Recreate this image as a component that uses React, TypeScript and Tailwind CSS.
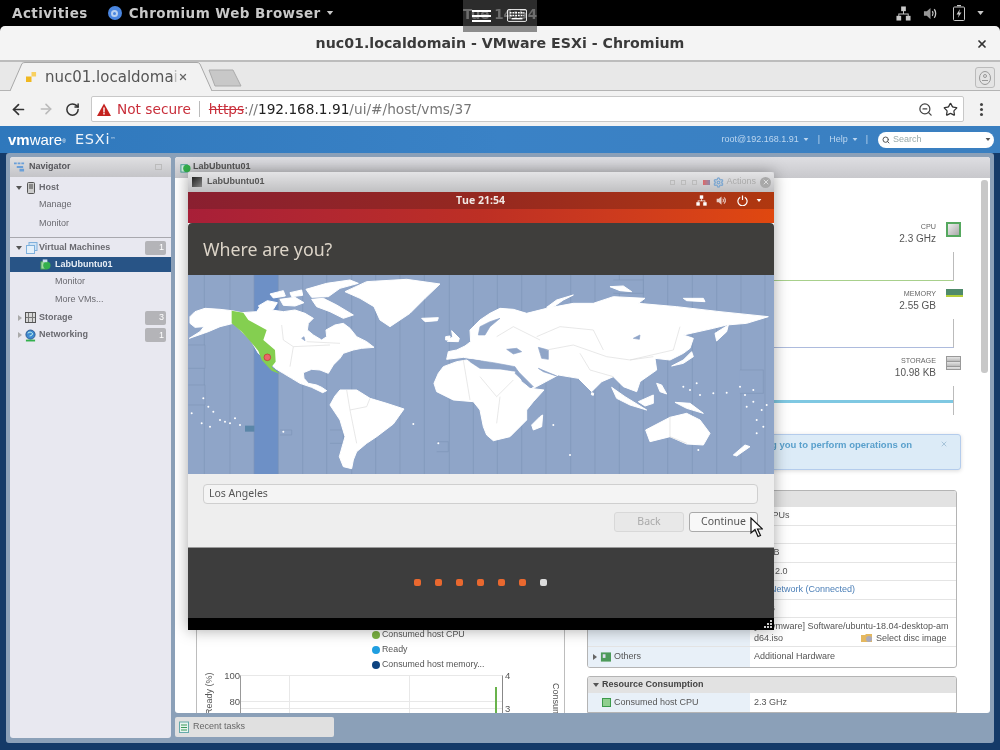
import { ArrowLeft, ArrowRight, RotateCw, ZoomOut, Star, X, Search, Settings } from "lucide-react";

const gnome = "font-['DejaVu_Sans',sans-serif]";
const arial = "font-['Liberation_Sans',Arial,sans-serif]";

function NetIcon({ className }: { className?: string }) {
  return (
    <svg viewBox="0 0 16 16" className={className} fill="currentColor">
      <rect x="5.5" y="0.5" width="5" height="5" />
      <rect x="0.5" y="10.5" width="5" height="5" />
      <rect x="10.5" y="10.5" width="5" height="5" />
      <path d="M7.5 5h1v3h5v3h-1V9H3.5v2h-1V8h5z" />
    </svg>
  );
}
function VolIcon({ className }: { className?: string }) {
  return (
    <svg viewBox="0 0 16 16" className={className} fill="none" stroke="currentColor">
      <path d="M1 5.5h3L8 2v12L4 10.5H1z" fill="currentColor" stroke="none" opacity="0.75" />
      <path d="M10 5.5c1 1.5 1 3.5 0 5M12 3.5c2 2.5 2 6.5 0 9" strokeWidth="1.4" />
    </svg>
  );
}
function Caret({ className }: { className?: string }) {
  return (
    <svg viewBox="0 0 8 5" className={className} fill="currentColor">
      <path d="M0 0h8L4 5z" />
    </svg>
  );
}

const land: string[] = [
  // North America
  "30,140 45,125 75,115 120,118 155,122 185,128 230,125 240,110 275,120 310,125 345,120 375,130 400,145 385,160 382,180 400,195 425,210 440,200 438,180 465,165 490,160 510,175 530,200 560,215 582,232 545,235 520,240 490,250 480,265 460,285 445,310 420,300 395,298 370,308 372,325 385,340 410,345 425,352 440,362 428,368 395,352 360,340 335,325 310,310 285,295 260,270 235,250 215,215 185,185 160,160 120,170 85,185 28,205 60,185 72,170 45,172 30,160",
  // Arctic archipelago
  "235,108 262,92 292,98 280,118 250,120",
  "300,88 345,82 372,98 345,108 310,106",
  "395,88 430,85 470,105 520,135 490,145 450,125 410,110",
  "378,58 440,40 510,30 535,40 480,55 445,80 395,82",
  "330,68 365,60 368,76 335,80",
  "270,72 310,62 316,78 280,84",
  // Greenland
  "495,65 560,35 680,28 780,42 735,85 690,130 630,170 600,150 582,110 540,85",
  // Iceland / UK / Ireland
  "725,145 775,143 772,152 735,155",
  "815,182 838,205 835,215 802,214 818,200",
  "797,200 810,198 810,210 797,210",
  // South America
  "450,405 465,378 480,360 530,360 570,385 620,400 672,417 640,462 590,500 560,520 530,545 520,570 515,596 490,590 478,560 495,500 480,450",
  // Africa
  "762,340 775,310 790,290 830,275 860,270 900,296 960,298 1010,306 1025,335 1050,355 1092,360 1060,395 1040,420 1040,450 990,500 940,512 920,495 910,470 900,420 880,395 820,390 770,365",
  // Eurasia
  "800,268 805,245 830,240 855,228 872,215 870,180 900,150 930,130 960,115 1000,118 1040,130 1100,115 1180,100 1240,100 1300,80 1395,85 1375,100 1490,110 1620,125 1765,140 1700,160 1640,165 1600,175 1510,195 1540,205 1530,235 1510,250 1470,270 1425,265 1430,300 1380,335 1370,365 1330,350 1300,320 1265,335 1235,365 1195,325 1135,315 1060,355 1010,300 970,290 940,282 900,270 850,262",
  // Sakhalin-Kamchatka, Novaya Zemlya, Svalbard
  "1605,190 1645,165 1640,185 1610,213",
  "1100,112 1130,90 1180,75 1150,90 1110,118",
  "1290,50 1330,48 1355,65 1320,62",
  "1510,85 1570,85 1575,95 1520,92",
  // Madagascar
  "1080,440 1088,435 1085,470 1060,480 1055,465",
  // Japan
  "1475,288 1510,270 1535,245 1540,260 1510,280",
  // Indonesia, Borneo, New Guinea
  "1295,352 1335,380 1400,420 1350,405 1310,385",
  "1375,395 1420,375 1420,400 1395,408",
  "1485,397 1530,400 1570,430 1520,415",
  "1430,340 1445,345 1460,372 1440,365",
  // Australia
  "1397,480 1470,442 1520,430 1560,450 1590,490 1570,525 1520,522 1470,500 1410,515",
  // NZ
  "1660,555 1695,525 1710,530 1670,558",
  // Sri Lanka
  "1235,368 1241,370 1240,376 1234,374",
];
const seas: string[] = [
  "900,170 930,155 960,145 930,170 915,195 895,195",
  "980,238 1010,235 1025,245 1000,252",
  "1075,232 1105,240 1105,268 1085,265",
  "870,268 940,278 1005,290 1015,305 960,297 900,295 870,275",
  "1360,205 1380,195 1378,208",
  "1010,300 1060,350 1050,352 1005,310",
  "1075,295 1130,318 1090,305",
  "365,205 372,200 375,212",
];
const borders = [
  "M850,270L860,330 870,390M900,320L950,380 1000,330M960,380L950,460",
  "M305,165L310,210 340,230 330,290M380,215L480,220M340,230L450,225",
  "M500,360L510,420 560,410 570,385M510,420L530,520",
  "M1070,200L1140,170 1240,180 1270,240M1100,240L1180,225 1280,260 1350,270 1420,260M1200,250L1230,300 1300,320M1350,270L1480,240 1500,170",
  "M950,200L1000,170 1080,210M1470,440L1470,500 1520,520",
];
const lines = [73, 150, 222, 295, 368, 440, 515, 587, 660, 733, 808, 880, 952, 1025, 1098, 1172, 1245, 1318, 1390, 1463, 1537, 1610, 1683, 1755];
const dots = [
  [70, 385], [85, 410], [100, 425], [35, 430], [65, 460], [120, 450], [135, 455], [150, 460], [165, 445], [180, 465], [90, 470], [310, 485], [700, 462], [775, 520], [1120, 465], [1170, 555], [1510, 350], [1550, 340], [1530, 360], [1560, 375], [1600, 370], [1640, 368], [1680, 350], [1695, 375], [1720, 395], [1745, 420], [1730, 450], [1750, 470], [1760, 405], [1700, 410], [1730, 490], [1555, 540], [1720, 360],
];

function WorldMap() {
  return (
    <svg viewBox="0 0 586 199" className="block h-[199px] w-[586px] shrink-0">
      <rect width="586" height="199" fill="#8fa5c8" />
      <g transform="translate(-8,-5) scale(0.33333)">
        <rect x="222" y="0" width="73" height="620" fill="#6d90c6" />
        {lines.map((x) => (
          <path key={x} d={`M${x},0V620`} stroke="#7f95b8" strokeWidth="2" fill="none" />
        ))}
        <path d="M25,225H75V295H25M25,345H75V405H25M1300,30H1390V70H1300M1680,300H1750V370H1680M300,480H335V495H300M770,515H805V545H770M450,480H490V520H450" stroke="#7f95b8" strokeWidth="2" fill="#8fa5c8" />
        {land.map((p, i) => (
          <polygon key={i} points={p} fill="#fff" stroke="#fff" strokeWidth="3" strokeLinejoin="round" />
        ))}
        {seas.map((p, i) => (
          <polygon key={i} points={p} fill="#8fa5c8" stroke="#8fa5c8" strokeWidth="2" strokeLinejoin="round" />
        ))}
        {borders.map((d, i) => (
          <path key={i} d={d} stroke="#dcdcdc" strokeWidth="2" fill="none" />
        ))}
        {dots.map(([x, y], i) => (
          <circle key={i} cx={x} cy={y} r="3" fill="#fff" />
        ))}
        <polygon points="155,122 190,128 205,150 260,180 250,210 285,240 287,275 275,290 300,312 275,302 245,270 235,243 212,215 185,185 155,160" fill="#84cf50" />
        <rect x="195" y="467" width="28" height="18" fill="#5a86a8" />
        <circle cx="262" cy="262" r="10" fill="#e8686a" stroke="#c0302a" strokeWidth="2" />
      </g>
    </svg>
  );
}

function NavRow({ label, indent, className }: { label: string; indent: string; className?: string }) {
  return <div className={`flex items-center ${indent} ${className ?? ""}`}>{label}</div>;
}
function Badge({ n }: { n: number }) {
  return <span className="ml-auto mr-[5px] flex h-[14px] w-[21px] items-center justify-end rounded-[2px] bg-[#b4b4b8] pr-[2px] text-[9px] leading-none text-white">{n}</span>;
}
function TreeCaret({ open }: { open?: boolean }) {
  return open ? (
    <svg viewBox="0 0 6 4" className="h-[4px] w-[6px] text-[#555]" fill="currentColor"><path d="M0 0h6L3 4z" /></svg>
  ) : (
    <svg viewBox="0 0 4 6" className="h-[6px] w-[4px] text-[#aaa]" fill="currentColor"><path d="M0 0v6l4-3z" /></svg>
  );
}

function Navigator() {
  return (
    <aside className="flex w-[161px] shrink-0 flex-col rounded-[3px] bg-[#e8e8f0] text-[9px] text-[#6a6a70]">
      <div className="flex h-[20px] items-center rounded-t-[3px] bg-gradient-to-b from-[#e0e0e2] to-[#c4c4c8] pl-[4px] font-bold text-[#55555a]">
        <svg viewBox="0 0 12 12" className="h-[12px] w-[11px]"><path d="M0 1h3v2H0zM4 1h3v2H4zM8 1h3v2H8zM3 5h7v2H3zM6 8h5v3H6z" fill="#6a9fd8" /></svg>
        <span className="ml-[4px]">Navigator</span>
        <span className="ml-auto mr-[9px] h-[6px] w-[7px] border border-[#bbb]" />
      </div>
      <div className="flex h-[21px] items-center pl-[6px]">
        <TreeCaret open />
        <svg viewBox="0 0 8 12" className="ml-[5px] h-[12px] w-[8px]"><rect x="0.5" y="0.5" width="7" height="11" rx="1" fill="#ccc" stroke="#555" /><rect x="2" y="2" width="4" height="5" fill="#888" /></svg>
        <span className="ml-[4px] font-bold">Host</span>
      </div>
      <NavRow label="Manage" indent="pl-[29px]" className="h-[13px]" />
      <NavRow label="Monitor" indent="pl-[29px]" className="h-[26px]" />
      <div className="h-[1px] bg-[#a8a8ae]" />
      <div className="flex h-[19px] items-center pl-[6px]">
        <TreeCaret open />
        <svg viewBox="0 0 12 12" className="ml-[4px] h-[12px] w-[12px]"><rect x="3" y="0.5" width="8" height="8" fill="#cfe3f5" stroke="#7fb0dc" /><rect x="0.5" y="3.5" width="8" height="8" fill="#e4f0fa" stroke="#7fb0dc" /></svg>
        <span className="ml-[1px] font-bold">Virtual Machines</span>
        <Badge n={1} />
      </div>
      <div className="flex h-[15px] items-center bg-[#285486] pl-[30px] font-bold text-[#e8eef5]">
        <svg viewBox="0 0 12 12" className="h-[11px] w-[11px]"><rect x="1" y="3" width="7" height="8" fill="#9fd8a0" stroke="#3c9a4c" /><circle cx="7.5" cy="7" r="4" fill="#34b04c" /><rect x="3" y="0.5" width="5" height="3" fill="#cde" /></svg>
        <span className="ml-[4px]">LabUbuntu01</span>
      </div>
      <NavRow label="Monitor" indent="pl-[45px]" className="h-[19px]" />
      <NavRow label="More VMs..." indent="pl-[45px]" className="h-[17px]" />
      <div className="flex h-[19px] items-center pl-[8px]">
        <TreeCaret />
        <svg viewBox="0 0 11 11" className="ml-[3px] h-[11px] w-[11px]"><rect x="0.5" y="0.5" width="10" height="10" fill="#d8d8d8" stroke="#555" /><path d="M3.5 1v9M7.5 1v9M1 5.5h9" stroke="#777" /></svg>
        <span className="ml-[3px] font-bold">Storage</span>
        <Badge n={3} />
      </div>
      <div className="flex h-[16px] items-center pl-[8px]">
        <TreeCaret />
        <svg viewBox="0 0 12 13" className="ml-[3px] h-[13px] w-[11px]"><circle cx="6" cy="5.5" r="5" fill="#3f89d0" stroke="#2a5a90" /><path d="M3 4c2-2 4-1 5 0s-1 3-3 3" stroke="#cfe" fill="none" /><rect x="1" y="11" width="10" height="2" fill="#34b04c" /></svg>
        <span className="ml-[3px] font-bold">Networking</span>
        <Badge n={1} />
      </div>
    </aside>
  );
}

function Stat({ label, value, icon, bar }: { label: string; value: string; icon: React.ReactNode; bar: React.ReactNode }) {
  return (
    <div className="flex h-[67px] flex-col items-end">
      <div className="flex h-[30px] items-start">
        <div className={`text-right ${arial}`}>
          <div className="text-[7.2px] leading-[9px] text-[#666]">{label}</div>
          <div className="text-[10px] leading-[15px] text-[#555]">{value}</div>
        </div>
        <div className="ml-[10px] mr-[-8px] w-[16px]">{icon}</div>
      </div>
      {bar}
    </div>
  );
}

function HwRow({ h = 19, left, right, blue }: { h?: number; left?: React.ReactNode; right?: React.ReactNode; blue?: boolean }) {
  return (
    <div className="flex border-b border-[#e4e4e4]" style={{ height: h }}>
      <div className="flex w-[162px] shrink-0 items-center bg-[#e8f0f8] pl-[6px]">{left}</div>
      <div className={`flex-1 px-[4px] pt-[2px] ${blue ? "text-[#4d80b8]" : ""}`}>{right}</div>
    </div>
  );
}

function MainPanel() {
  return (
    <section className="flex h-[556px] w-[815px] flex-col overflow-hidden rounded-[3px] bg-white">
      <div className="flex h-[21px] shrink-0 items-center bg-gradient-to-b from-[#dedee2] to-[#c8c8cc] pb-[1px] pl-[5px] text-[9px] font-bold text-[#555]">
        <svg viewBox="0 0 12 12" className="h-[11px] w-[11px]"><rect x="1" y="3" width="7" height="8" fill="#cfeadf" stroke="#3c9a8c" /><circle cx="7.5" cy="7" r="4" fill="#34b04c" /></svg>
        <span className="ml-[2px]">LabUbuntu01</span>
      </div>
      <div className="flex min-h-0 flex-1 text-[9px] text-[#555]">
        <div className={`flex w-[806px] shrink-0 flex-col pl-[21px] ${arial}`}>
          <div className="h-[44px] shrink-0" />
          <div className="shrink-0 pr-[27px]">
            <Stat
              label="CPU"
              value="2.3 GHz"
              icon={<span className="block h-[15px] w-[15px] border-2 border-[#55a85f] bg-gradient-to-br from-[#eee] to-[#aaa]" />}
              bar={<div className="h-[29px] w-[300px] border-b border-r border-b-[#a8d08c] border-r-[#bbb]" />}
            />
            <Stat
              label="MEMORY"
              value="2.55 GB"
              icon={<span className="block h-[8px] w-[17px] border-b-2 border-[#b5cf3a] bg-[#4f8a6a]" />}
              bar={<div className="h-[29px] w-[300px] border-b border-r border-b-[#adbbdd] border-r-[#bbb]" />}
            />
            <Stat
              label="STORAGE"
              value="10.98 KB"
              icon={<span className="block h-[14px] w-[15px] border border-[#999] bg-[repeating-linear-gradient(180deg,#e4e4e4_0,#bbb_4px,#777_5px)]" />}
              bar={
                <div className="flex h-[29px] w-[300px] flex-col border-r border-[#bbb] pt-[14px]">
                  <div className="h-[3px] bg-[#7fc8e2]" />
                </div>
              }
            />
          </div>
          <div className="ml-auto mr-[20px] mt-[11px] flex h-[36px] w-[400px] shrink-0 justify-end rounded-[3px] border border-[#b4ccec] bg-[#dcebf7] pr-[12px] pt-[3px] text-[9.5px] font-bold text-[#5aa0cc] shadow-[0_1px_4px_rgba(0,0,0,0.15)]">
            <span>allowing you to perform operations on</span>
            <X className="ml-[28px] mt-[2px] h-[8px] w-[8px] text-[#9cbcd4]" strokeWidth={2.5} />
          </div>
          <div className="mt-[20px] flex min-h-0 flex-1 gap-[22px]">
            <div className="flex w-[369px] shrink-0 flex-col border-x border-[#bdbdbd]">
              <div className="h-[137px] shrink-0" />
              <div className="ml-[175px] flex flex-col text-[8.8px] leading-[15px] text-[#555]">
                {[
                  ["bg-[#7cb342]", "Consumed host CPU"],
                  ["bg-[#1f9ee0]", "Ready"],
                  ["bg-[#0d4380]", "Consumed host memory..."],
                ].map(([c, t]) => (
                  <div key={t} className="flex items-center gap-[2px]">
                    <span className={`h-[8px] w-[8px] rounded-full ${c}`} />
                    {t}
                  </div>
                ))}
              </div>
              <div className="mt-[3px] flex h-[40px] shrink-0 text-[9.5px] text-[#555]">
                <div className="flex w-[18px] justify-end"><span className="translate-x-[1px] whitespace-nowrap text-[9px] [writing-mode:vertical-rl] rotate-180">Ready (%)</span></div>
                <div className="w-[25px] text-right leading-[26px]">
                  <div className="mt-[-12px]">100</div>
                  <div>80</div>
                </div>
                <div className="relative w-[263px] border-x border-t border-l-[#999] border-r-[#888] border-t-[#e8e8e8] bg-[linear-gradient(#e8e8e8,#e8e8e8),linear-gradient(#e8e8e8,#e8e8e8)] bg-[length:100%_1px,100%_1px] bg-[position:0_25px,0_32px] bg-no-repeat">
                  <div className="flex h-full">
                    <div className="h-full w-[49px] border-r border-[#e8e8e8]" />
                    <div className="h-full w-[120px] border-r border-[#e8e8e8]" />
                  </div>
                  <span className="absolute left-[254px] top-[11px] h-[29px] w-[2px] bg-[#69b34c]" />
                </div>
                <div className="w-[14px] pl-[2px] leading-[33px]">
                  <div className="mt-[-16px]">4</div>
                  <div>3</div>
                </div>
                <div className="ml-[31px] mt-[8px] whitespace-nowrap text-[9px] [writing-mode:vertical-rl]">Consum</div>
              </div>
            </div>
            <div className="flex w-[370px] shrink-0 flex-col gap-[8px]">
              <div className="shrink-0 overflow-hidden rounded-[3px] border border-[#b4b4b4] text-[9px]">
                <div className="h-[16px] bg-[#e2e2e2]" />
                <HwRow right="2 vCPUs" />
                <HwRow right="2 GB" h={18} />
                <HwRow right="16 GB" />
                <HwRow right="USB 2.0" h={18} />
                <HwRow right="VM Network (Connected)" blue h={19} />
                <HwRow right="4 MB" h={18} />
                <HwRow
                  h={29}
                  right={
                    <div className="leading-[12px]">
                      <div className="whitespace-nowrap">[iso-vmware] Software/ubuntu-18.04-desktop-am</div>
                      <div className="flex items-center">
                        d64.iso
                        <span className="ml-[78px] flex items-center gap-[3px]">
                          <svg viewBox="0 0 12 10" className="h-[10px] w-[12px]"><path d="M0 2h4l1-1h6v8H0z" fill="#e4b860" /><circle cx="8" cy="6" r="3" fill="#aab" /></svg>
                          Select disc image
                        </span>
                      </div>
                    </div>
                  }
                />
                <div className="flex h-[20px]">
                  <div className="flex w-[162px] shrink-0 items-center bg-[#e8f0f8] pl-[5px]">
                    <svg viewBox="0 0 4 6" className="h-[6px] w-[4px] text-[#666]" fill="currentColor"><path d="M0 0v6l4-3z" /></svg>
                    <svg viewBox="0 0 12 10" className="ml-[3px] h-[10px] w-[11px]"><rect x="1" y="0" width="11" height="10" fill="#4d9a5a" /><rect x="3" y="2" width="3" height="4" fill="#dde" /></svg>
                    <span className="ml-[3px]">Others</span>
                  </div>
                  <div className="flex flex-1 items-center px-[4px]">Additional Hardware</div>
                </div>
              </div>
              <div className="shrink-0 overflow-hidden rounded-t-[3px] border border-[#b4b4b4] text-[9px]">
                <div className="flex h-[16px] items-center bg-[#e2e2e2] pl-[5px] font-bold text-[#444]">
                  <TreeCaret open />
                  <span className="ml-[3px]">Resource Consumption</span>
                </div>
                <div className="flex h-[19px]">
                  <div className="flex w-[162px] shrink-0 items-center bg-[#e8f0f8] pl-[14px]">
                    <span className="h-[9px] w-[9px] border border-[#3c9a4c] bg-[#8fcf8f]" />
                    <span className="ml-[3px]">Consumed host CPU</span>
                  </div>
                  <div className="flex flex-1 items-center px-[4px]">2.3 GHz</div>
                </div>
              </div>
            </div>
          </div>
        </div>
        <div className="mt-[2px] h-[193px] w-[7px] rounded-[3px] bg-[#c8c8c8]" />
      </div>
    </section>
  );
}

function VmWindow() {
  return (
    <div className="absolute left-[188px] top-[172px] flex h-[458px] w-[586px] flex-col shadow-[0_0_14px_rgba(0,0,0,0.35)]">
      <div className={`flex h-[20px] shrink-0 items-center rounded-t-[3px] bg-gradient-to-b from-[#e4e4e6] to-[#c0c0c2] pl-[4px] pr-[3px] text-[9px] text-[#555] ${arial}`}>
        <span className="h-[10px] w-[10px] bg-gradient-to-br from-[#222] to-[#888]" />
        <span className="ml-[5px] font-bold">LabUbuntu01</span>
        <div className="ml-auto flex items-center text-[#aaa]">
          <span className="h-[5px] w-[5px] border border-[#bbb]" />
          <span className="ml-[6px] h-[5px] w-[5px] border border-[#bbb]" />
          <span className="ml-[6px] h-[5px] w-[5px] border border-[#bbb]" />
          <span className="ml-[6px] h-[5px] w-[7px] bg-gradient-to-r from-[#d66] to-[#88a]" />
          <Settings className="ml-[3px] h-[11px] w-[11px] text-[#7fa8d0]" strokeWidth={3} />
          <span className="ml-[2px]">Actions</span>
          <span className="ml-[4px] flex h-[11px] w-[11px] items-center justify-center rounded-full bg-[#a8a8a8]"><X className="h-[8px] w-[8px] text-[#ddd]" strokeWidth={3} /></span>
        </div>
      </div>
      <div className="flex h-[17px] shrink-0 items-center bg-gradient-to-r from-[#8a1f30] via-[#95281f] to-[#b0380f]">
        <span className="ml-[268px] w-[49px] whitespace-nowrap font-['Open_Sans',sans-serif] text-[10.5px] font-bold text-[#f0e8e4]">Tue 21:54</span>
        <NetIcon className="ml-[191px] h-[11px] w-[11px] text-white" />
        <VolIcon className="ml-[9px] h-[11px] w-[11px] text-white" />
        <svg viewBox="0 0 12 12" className="ml-[10px] h-[11px] w-[11px]" fill="none" stroke="#fff" strokeWidth="1.3"><path d="M3.5 2.5a5 5 0 1 0 5 0M6 0.5v5" /></svg>
        <Caret className="ml-[8px] h-[3px] w-[6px] text-white" />
      </div>
      <div className="h-[14px] shrink-0 bg-gradient-to-r from-[#a81f38] via-[#bd2f24] to-[#e0480f]" />
      <div className="flex h-[52px] shrink-0 items-center rounded-t-[4px] bg-[#3f3e3c] pl-[15px] font-['Noto_Sans',sans-serif] text-[17.8px] text-[#dcd4c8]">
        Where are you?
      </div>
      <WorldMap />
      <div className="flex h-[73px] shrink-0 flex-col bg-[#eeeeee] pl-[15px] pr-[16px] pt-[10px] font-['Noto_Sans',sans-serif] text-[10.5px] text-[#555]">
        <div className="flex h-[20px] items-center rounded-[4px] border border-[#cfcfcf] bg-[#f4f4f4] pl-[5px]">Los Angeles</div>
        <div className="mt-[8px] flex justify-end gap-[5px]">
          <div className="flex h-[20px] w-[70px] items-center justify-center rounded-[3px] border border-[#d8d8d8] bg-[#e8e8e8] text-[#aaa]">Back</div>
          <div className="flex h-[20px] w-[69px] items-center justify-center rounded-[3px] border border-[#aaa] bg-[#f8f8f8] text-[#555]">Continue</div>
        </div>
      </div>
      <div className="flex h-[71px] shrink-0 items-center justify-center gap-[14px] border-t border-[#999] bg-[#3d3d3d] pb-[1px] pr-[1px]">
        {[0, 1, 2, 3, 4, 5].map((i) => (
          <span key={i} className="h-[7px] w-[7px] rounded-[2px] bg-[#e9682f]" />
        ))}
        <span className="h-[7px] w-[7px] rounded-[2px] bg-[#dcdcdc]" />
      </div>
      <div className="flex h-[12px] shrink-0 items-end justify-end bg-black pb-[1px] pr-[1px]">
        <svg viewBox="0 0 9 9" className="h-[9px] w-[9px]" fill="#ccc"><path d="M6 0h2v2H6zM6 3h2v2H6zM3 3h2v2H3zM6 6h2v2H6zM3 6h2v2H3zM0 6h2v2H0z" /></svg>
      </div>
    </div>
  );
}

export default function App() {
  return (
    <div className={`relative flex h-[750px] w-[1000px] flex-col overflow-hidden bg-black blur-[0.35px] ${gnome}`}>
      {/* GNOME top bar */}
      <header className="flex h-[26px] shrink-0 items-center text-[13.5px] font-bold tracking-[0.45px] text-[#c8c8c8]">
        <span className="ml-[12px]">Activities</span>
        <span className="ml-[20px] flex h-[14px] w-[14px] items-center justify-center rounded-full bg-[#4a86e0]">
          <span className="h-[7px] w-[7px] rounded-full border-2 border-[#b8d0f0]" />
        </span>
        <span className="ml-[7px]">Chromium Web Browser</span>
        <Caret className="ml-[5px] h-[4px] w-[8px]" />
        <div className="ml-auto flex items-center text-[#c8c8c8]">
          <NetIcon className="h-[15px] w-[15px]" />
          <VolIcon className="ml-[12px] h-[15px] w-[15px]" />
          <svg viewBox="0 0 12 16" className="ml-[15px] h-[16px] w-[12px]" fill="none" stroke="currentColor"><rect x="0.5" y="2" width="11" height="13.5" rx="1" /><path d="M4 0.5h4" strokeWidth="1.5" /><path d="M7 4L3.5 9.5h2.3L4.8 13l3.7-5.5H6.2z" fill="currentColor" stroke="none" /></svg>
          <Caret className="ml-[11px] mr-[15px] h-[4px] w-[9px]" />
        </div>
      </header>

      {/* Chromium window */}
      <main className="flex min-h-0 flex-1 flex-col overflow-hidden rounded-t-[5px] bg-[#f4f4f4]">
        <div className="flex h-[36px] shrink-0 items-center border-b-2 border-[#bcbcbc] pt-[2px]">
          <span className="flex-1 pl-[24px] text-center text-[14.2px] font-bold text-[#3a3a3a]">nuc01.localdomain - VMware ESXi - Chromium</span>
          <X className="mr-[12px] h-[12px] w-[12px] text-[#333]" strokeWidth={3.5} />
        </div>
        <div className="flex h-[29px] shrink-0 items-end border-b border-[#b4b4b4] bg-[#e8e8e8] pl-[10px]">
          <div className="relative flex h-[28px] w-[202px] items-center pl-[16px] pt-[2px] text-[15px] text-[#555]">
            <svg viewBox="0 0 202 29" className="absolute inset-0 h-[29px] w-[202px]" fill="#f2f2f2" stroke="#a8a8a8"><path d="M0 29L12 1.5Q13 .5 15 .5H187Q189 .5 190 2L202 29" /></svg>
            <svg viewBox="0 0 12 12" className="relative h-[11px] w-[11px]"><path d="M6 0h5v5H6z" fill="#f8d060" /><path d="M0 5h6v6H0z" fill="#f0b820" /></svg>
            <span className="relative ml-[8px] w-[130px] whitespace-nowrap">nuc01.localdoma<span className="text-[#bbb]">i</span></span>
            <X className="relative ml-[3px] h-[10px] w-[10px] text-[#666]" strokeWidth={3} />
          </div>
          <svg viewBox="0 0 34 18" className="mb-[3px] ml-[-4px] h-[18px] w-[34px]"><path d="M1 1H25L33 17H7z" fill="#c8c8c8" stroke="#aaa" /></svg>
          <div className="mb-[2px] ml-auto mr-[5px] flex h-[21px] w-[20px] items-center justify-center rounded-[3px] border border-[#bbb] bg-[#e4e4e4]">
            <svg viewBox="0 0 12 14" className="h-[14px] w-[12px]" fill="none" stroke="#999"><ellipse cx="6" cy="7" rx="5.5" ry="6.5" /><circle cx="6" cy="5" r="1.5" /><path d="M3 9.5h6" /></svg>
          </div>
        </div>
        <div className="flex h-[35px] shrink-0 items-center bg-[#f2f2f2] pt-[1px]">
          <ArrowLeft className="ml-[10px] h-[17px] w-[17px] text-[#333]" strokeWidth={2.4} />
          <ArrowRight className="ml-[11px] h-[16px] w-[16px] text-[#bbb]" strokeWidth={2.4} />
          <RotateCw className="ml-[11px] h-[15px] w-[15px] text-[#333]" strokeWidth={2.4} />
          <div className="ml-[11px] flex h-[26px] w-[873px] items-center rounded-[2px] border border-[#c8c8c8] bg-white text-[13.7px]">
            <svg viewBox="0 0 14 13" className="ml-[5px] h-[13px] w-[14px]"><path d="M7 0.5L14 13H0z" fill="#c5221f" /><path d="M6.3 4.5h1.4v5H6.3zM6.3 10h1.4v1.5H6.3z" fill="#fff" /></svg>
            <span className="ml-[6px] text-[#c9303c]">Not secure</span>
            <span className="ml-[8px] h-[16px] w-[1px] bg-[#bbb]" />
            <span className="ml-[9px] text-[#c9303c] line-through">https</span>
            <span className="text-[#777]">://</span>
            <span className="text-[#222]">192.168.1.91</span>
            <span className="text-[#777]">/ui/#/host/vms/37</span>
            <ZoomOut className="ml-auto h-[15px] w-[15px] text-[#444]" strokeWidth={2} />
            <Star className="ml-[10px] mr-[5px] h-[15px] w-[15px] text-[#333]" strokeWidth={2} />
          </div>
          <div className="ml-[16px] flex flex-col gap-[2px]">
            <span className="h-[3px] w-[3px] rounded-full bg-[#444]" />
            <span className="h-[3px] w-[3px] rounded-full bg-[#444]" />
            <span className="h-[3px] w-[3px] rounded-full bg-[#444]" />
          </div>
        </div>

        {/* ESXi */}
        <div className={`flex min-h-0 flex-1 flex-col bg-[#143a68] ${arial}`}>
          <div className="flex h-[27px] shrink-0 items-center bg-gradient-to-r from-[#2f78bc] via-[#3a82c6] to-[#3a7fc0] text-[9px] text-[#bcd6f0]">
            <span className="ml-[8px] text-[15px] leading-none text-white"><b>vm</b>ware<sup className="text-[5px]">®</sup></span>
            <span className="ml-[9px] font-['DejaVu_Sans',sans-serif] text-[14.5px] tracking-[0.8px] text-[#eef4fa]">ESXi<sup className="text-[5px]">™</sup></span>
            <span className="ml-auto">root@192.168.1.91</span>
            <Caret className="ml-[4px] h-[3px] w-[6px]" />
            <span className="ml-[9px]">|</span>
            <span className="ml-[9px]">Help</span>
            <Caret className="ml-[4px] h-[3px] w-[6px]" />
            <span className="ml-[8px]">|</span>
            <div className="ml-[10px] mr-[6px] flex h-[16px] w-[116px] items-center rounded-full bg-white pl-[4px] text-[#9aa]">
              <Search className="h-[8px] w-[8px] text-[#555]" strokeWidth={3} />
              <span className="ml-[3px]">Search</span>
              <Caret className="ml-auto mr-[3px] h-[3px] w-[6px] text-[#555]" />
            </div>
          </div>
          <div className="mx-[6px] flex h-[590px] shrink-0 gap-[4px] rounded-[3px] bg-[#8ba0b8] px-[4px] pt-[4px]">
            <div className="flex h-[581px]"><Navigator /></div>
            <div className="flex flex-col">
              <MainPanel />
              <div className="mt-[4px] flex h-[20px] w-[159px] items-center rounded-[2px] bg-[#e0e0e0] pl-[4px] text-[9px] text-[#666]">
                <svg viewBox="0 0 10 12" className="h-[12px] w-[10px]"><rect x="0.5" y="1" width="9" height="10.5" fill="#e8f4f0" stroke="#6aa" /><path d="M2 4h6M2 6.5h6M2 9h6" stroke="#3a9a5a" /></svg>
                <span className="ml-[4px]">Recent tasks</span>
              </div>
            </div>
          </div>
        </div>
      </main>

      <VmWindow />

      {/* Cursor over the guest */}
      <svg viewBox="0 0 13 21" className="absolute left-[750px] top-[517px] h-[21px] w-[13px]">
        <path d="M1 1v15l4-3.5 3 7 2.5-1-3-6.5h5z" fill="#fff" stroke="#111" strokeWidth="1.2" />
      </svg>

      {/* Remote console bar over the clock */}
      <div className="absolute left-[463px] top-0 flex h-[32px] w-[74px] flex-col">
        <div className="relative flex h-[26px] items-center overflow-hidden bg-[#2c2c2c]">
          <span className="absolute left-0 top-[4px] whitespace-nowrap text-[13.5px] font-bold text-[#6e6e6e]">Tue 14:54</span>
          <div className="relative ml-[9px] mt-[5px] flex w-[19px] flex-col gap-[3px]">
            <span className="h-[2px] bg-white" />
            <span className="h-[2px] bg-white" />
            <span className="h-[2px] bg-white" />
          </div>
          <svg viewBox="0 0 22 14" className="relative ml-[16px] mt-[5px] h-[13px] w-[20px]" fill="none" stroke="#fff"><rect x="0.5" y="0.5" width="21" height="13" rx="1.5" /><path d="M3 4h16M3 7h16" strokeDasharray="2 1" strokeWidth="1.6" /><path d="M5 10.5h12" strokeWidth="1.6" /></svg>
        </div>
        <div className="h-[6px] bg-[#8c8c8c]" />
      </div>
    </div>
  );
}
